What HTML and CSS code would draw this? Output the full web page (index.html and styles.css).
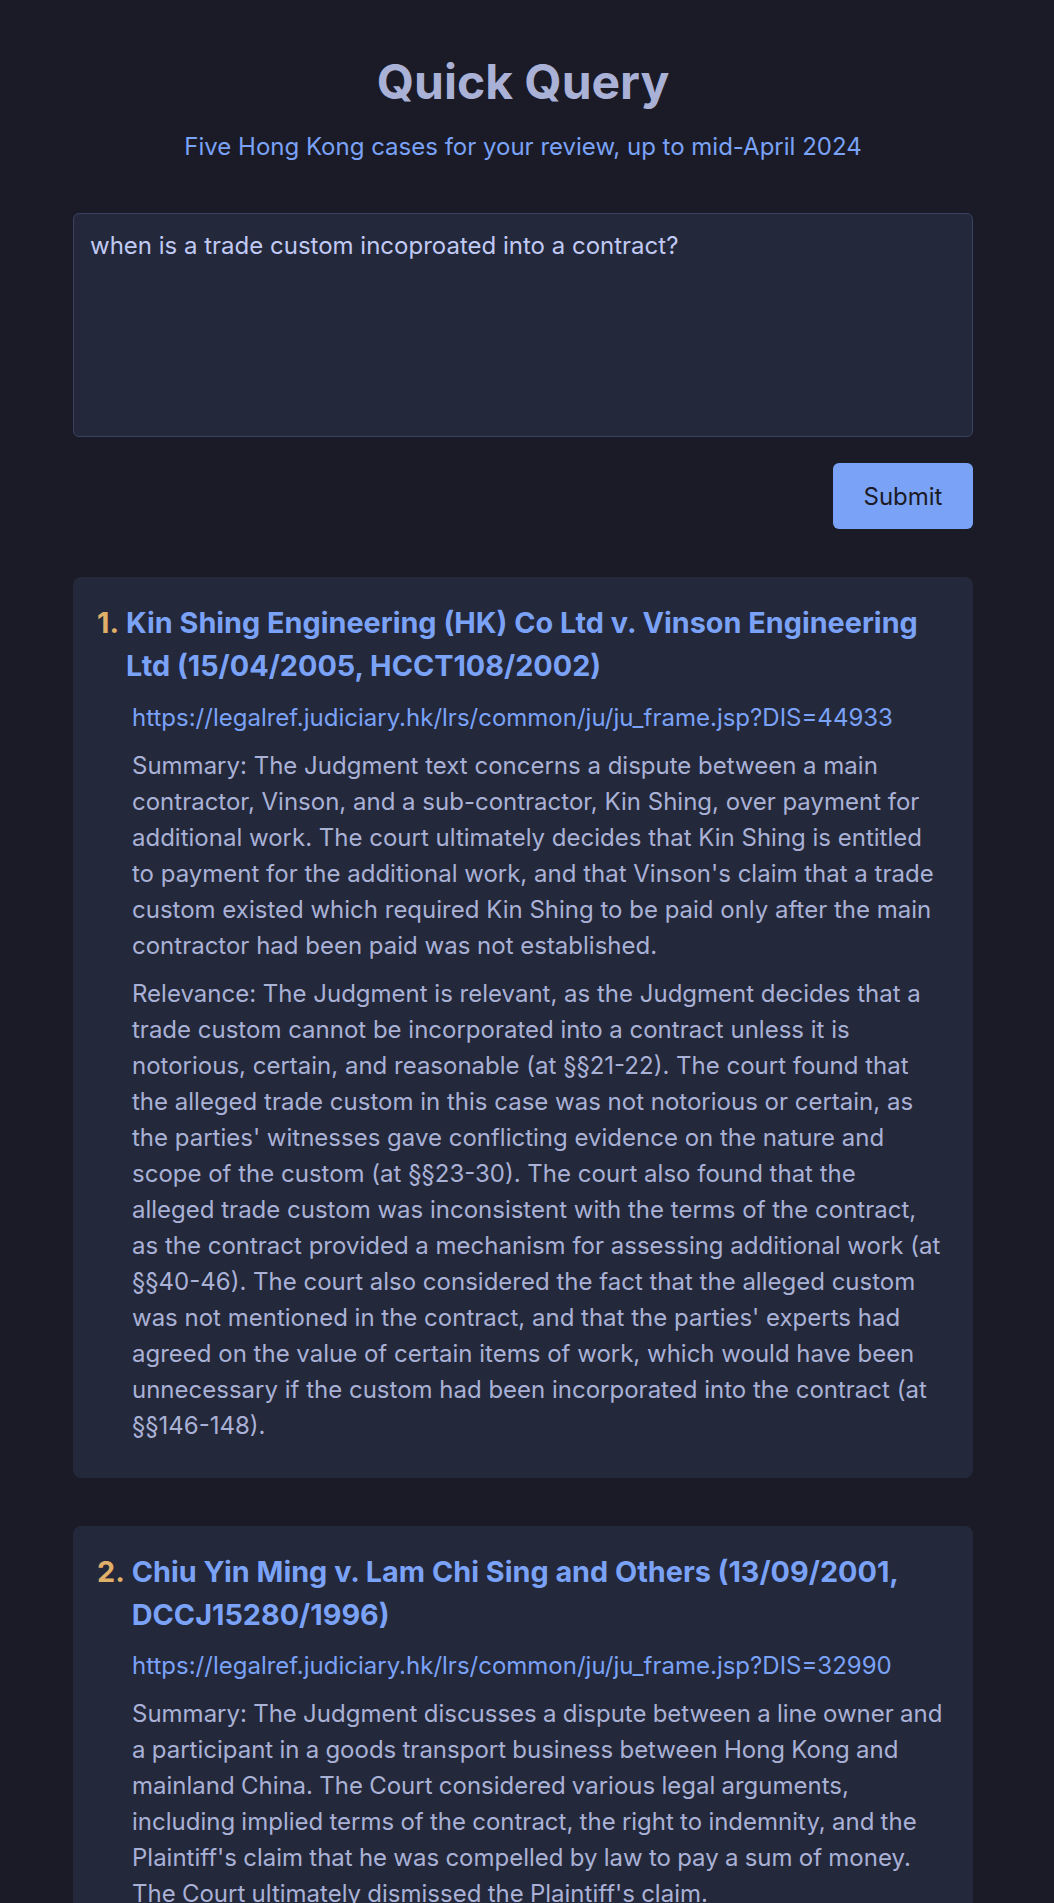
FILE: index.html
```html
<!DOCTYPE html>
<html lang="en">
<head>
<meta charset="utf-8">
<title>Quick Query</title>
<link rel="stylesheet" href="styles.css">
</head>
<body>
<main class="page">
  <header class="masthead">
    <h1 class="title">Quick Query</h1>
    <p class="subtitle">Five Hong Kong cases for your review, up to mid-April 2024</p>
  </header>

  <form class="query-form">
    <textarea class="query-input">when is a trade custom incoproated into a contract?</textarea>
    <div class="form-actions">
      <button type="button" class="submit-btn">Submit</button>
    </div>
  </form>

  <section class="results">
    <article class="case-card">
      <h2 class="case-title"><span class="case-num">1.</span><span class="case-name">Kin Shing Engineering (HK) Co Ltd v. Vinson Engineering Ltd (15/04/2005, HCCT108/2002)</span></h2>
      <div class="case-body">
        <a class="case-link" href="#">https://legalref.judiciary.hk/lrs/common/ju/ju_frame.jsp?DIS=44933</a>
        <p class="case-text">Summary: The Judgment text concerns a dispute between a main contractor, Vinson, and a sub-contractor, Kin Shing, over payment for additional work. The court ultimately decides that Kin Shing is entitled to payment for the additional work, and that Vinson's claim that a trade custom existed which required Kin Shing to be paid only after the main contractor had been paid was not established.</p>
        <p class="case-text">Relevance: The Judgment is relevant, as the Judgment decides that a trade custom cannot be incorporated into a contract unless it is notorious, certain, and reasonable (at §§21-22). The court found that the alleged trade custom in this case was not notorious or certain, as the parties' witnesses gave conflicting evidence on the nature and scope of the custom (at §§23-30). The court also found that the alleged trade custom was inconsistent with the terms of the contract, as the contract provided a mechanism for assessing additional work (at §§40-46). The court also considered the fact that the alleged custom was not mentioned in the contract, and that the parties' experts had agreed on the value of certain items of work, which would have been unnecessary if the custom had been incorporated into the contract (at §§146-148).</p>
      </div>
    </article>

    <article class="case-card">
      <h2 class="case-title"><span class="case-num">2.</span><span class="case-name">Chiu Yin Ming v. Lam Chi Sing and Others (13/09/2001, DCCJ15280/1996)</span></h2>
      <div class="case-body">
        <a class="case-link" href="#">https://legalref.judiciary.hk/lrs/common/ju/ju_frame.jsp?DIS=32990</a>
        <p class="case-text case-text--tight">Summary: The Judgment discusses a dispute between a line owner and a participant in a goods transport business between Hong Kong and mainland China. The Court considered various legal arguments, including implied terms of the contract, the right to indemnity, and the Plaintiff's claim that he was compelled by law to pay a sum of money. The Court ultimately dismissed the Plaintiff's claim.</p>
        <p class="case-text">Relevance: The Judgment is relevant, as the Court considered whether a term could be implied into the contract by reason of the custom and practice of the trade, and held that such a custom must be certain, notorious and reasonable before it can be incorporated.</p>
      </div>
    </article>
  </section>
</main>
</body>
</html>
```

FILE: styles.css
```css
* {
  box-sizing: border-box;
}

html, body {
  margin: 0;
  background: #1a1b26;
}

body {
  padding: 0 8px 0 0;
  font-family: Inter, "Noto Sans", "Liberation Sans", sans-serif;
  color: #a9b1d6;
}

.page {
  max-width: 900px;
  margin: 0 auto;
  padding: 53px 0 48px;
}

.masthead {
  text-align: center;
}

.title {
  margin: 0;
  font-size: 48px;
  line-height: 57.6px;
  font-weight: 700;
  color: #a9b1d6;
}

.subtitle {
  margin: 19px 0 0;
  font-size: 24px;
  line-height: 33.6px;
  color: #7aa2f7;
}

.query-form {
  margin-top: 50px;
}

.query-input {
  display: block;
  width: 100%;
  height: 224px;
  padding: 14px 16px;
  border: 1px solid #3b4261;
  border-radius: 6px;
  background: #24283b;
  color: #c0caf5;
  font-family: inherit;
  font-size: 24px;
  line-height: 36px;
  resize: none;
}

.form-actions {
  display: flex;
  justify-content: flex-end;
  margin-top: 26px;
}

.submit-btn {
  width: 140px;
  height: 66px;
  border: none;
  border-radius: 6px;
  background: #7aa2f7;
  color: #1a1b26;
  font-family: inherit;
  font-size: 24px;
}

.results {
  margin-top: 48px;
  display: flex;
  flex-direction: column;
  gap: 48px;
}

.case-card {
  background: #24283b;
  border-radius: 8px;
  padding: 24px 24px 22px;
}

.case-title {
  display: flex;
  margin: 0;
  font-size: 28.8px;
  line-height: 43.2px;
  font-weight: 700;
  color: #7aa2f7;
}

.case-num {
  flex: none;
  color: #e0af68;
  margin-right: 7px;
}

.case-body {
  margin: 0 5px 0 35px;
  padding-top: 12px;
}

.case-link {
  display: block;
  font-size: 24px;
  line-height: 36px;
  color: #7aa2f7;
  text-decoration: none;
}

.case-text {
  margin: 12px 0;
  font-size: 24px;
  line-height: 36px;
  color: #a9b1d6;
}

.case-text--tight {
  word-spacing: -0.5px;
}
```
